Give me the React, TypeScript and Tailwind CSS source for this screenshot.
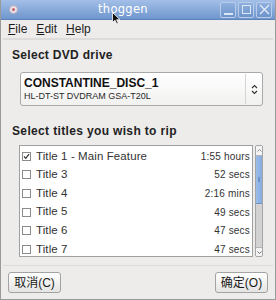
import React from "react";

const titles = [
  { name: "Title 1 - Main Feature", len: "1:55 hours", checked: true },
  { name: "Title 3", len: "52 secs", checked: false },
  { name: "Title 4", len: "2:16 mins", checked: false },
  { name: "Title 5", len: "49 secs", checked: false },
  { name: "Title 6", len: "47 secs", checked: false },
  { name: "Title 7", len: "47 secs", checked: false },
];

function WinButton({ children }: { children: React.ReactNode }) {
  return (
    <div className="w-[16px] h-[16px] rounded-[2px] border border-[#b9cdea] bg-gradient-to-b from-[#8fb0de] to-[#6e94cb] flex items-center justify-center">
      {children}
    </div>
  );
}

function Check({ checked }: { checked: boolean }) {
  return (
    <div className="w-[9px] h-[9px] border border-[#8a8a8a] bg-white flex items-center justify-center">
      {checked && (
        <svg width="7" height="7" viewBox="0 0 7 7">
          <path d="M1 3.5 L2.8 5.4 L6 1.2" stroke="#333" strokeWidth="1.2" fill="none" />
        </svg>
      )}
    </div>
  );
}

export default function App() {
  return (
    <div
      className="w-[276px] h-[300px] bg-[#edeceb] flex flex-col border-x border-b border-[#9a9a9a] overflow-hidden relative text-[#222]"
      style={{ fontFamily: '"Liberation Sans", Arial, sans-serif' }}
    >
      {/* title bar */}
      <div className="h-[20px] shrink-0 relative bg-gradient-to-b from-[#a3bfe8] to-[#6f96cd] border-b border-[#5d83bb] flex items-center">
        <div className="ml-[8px] w-[9px] h-[9px] rounded-full bg-[#e9e3ea] border border-[#b8a9bd] flex items-center justify-center">
          <div className="w-[3px] h-[3px] rounded-full bg-[#c0616a]" />
        </div>
        <div
          className="absolute left-[97px] top-0 h-[20px] flex items-center text-white text-[11.5px] tracking-[0.3px]"
          style={{ fontFamily: '"DejaVu Sans", sans-serif' }}
        >
          thoggen
        </div>
        <div className="ml-auto mr-[3px] flex gap-[2px]">
          <WinButton>
            <div className="w-[9px] h-[2px] bg-[#dce7f6] mt-[8px]" />
          </WinButton>
          <WinButton>
            <div className="w-[9px] h-[9px] border border-[#dce7f6]" />
          </WinButton>
          <WinButton>
            <svg width="11" height="11" viewBox="0 0 11 11">
              <path d="M1 1 L10 10 M10 1 L1 10" stroke="#e4ecf8" strokeWidth="1.3" />
            </svg>
          </WinButton>
        </div>
        {/* mouse cursor */}
        <svg className="absolute left-[111px] top-[12px]" width="9" height="13" viewBox="0 0 9 13">
          <path d="M0.5 0.5 L0.5 10.5 L3 8.2 L4.8 12 L6.3 11.3 L4.6 7.7 L8 7.7 Z" fill="#111" stroke="#fff" strokeWidth="0.8" />
        </svg>
      </div>

      {/* menu bar */}
      <div className="h-[18px] shrink-0 flex items-center gap-[9px] px-[7px] text-[12px] text-[#1c1c1c]">
        <span><span className="underline">F</span>ile</span>
        <span><span className="underline">E</span>dit</span>
        <span><span className="underline">H</span>elp</span>
      </div>
      <div className="h-[2px] shrink-0 mx-[2px] bg-[#dddcda]" />

      {/* content */}
      <div className="flex flex-col px-[11px] pt-[7px]">
        <div className="h-[16px] text-[12px] font-bold tracking-[0.3px] leading-[16px]">Select DVD drive</div>
        <div className="mt-[9px] ml-[8px] mr-[1px] h-[34px] rounded-[3px] border border-[#a9a9a9] bg-gradient-to-b from-white to-[#f1f1f0] flex items-stretch">
          <div className="flex-1 flex flex-col justify-center pl-[3px]">
            <div className="text-[12px] font-bold leading-[14px] text-[#111]">CONSTANTINE_DISC_1</div>
            <div className="text-[9px] leading-[12px] text-[#2a2a2a]">HL-DT-ST DVDRAM GSA-T20L</div>
          </div>
          <div className="w-px my-[1px] bg-[#d4d4d4]" />
          <div className="w-[16px] flex items-center justify-center">
            <svg width="7" height="11" viewBox="0 0 7 11">
              <path d="M1 4 L3.5 1.5 L6 4 M1 7 L3.5 9.5 L6 7" stroke="#333" strokeWidth="1.1" fill="none" />
            </svg>
          </div>
        </div>

        <div className="mt-[17px] h-[16px] text-[12px] font-bold tracking-[0.35px] leading-[16px]">Select titles you wish to rip</div>
        <div className="mt-[6px] ml-[7px] mr-[1px] h-[112px] flex">
          <div className="flex-1 border border-[#a0a0a0] bg-white overflow-hidden pl-[2px] pr-[2px] pt-[1px]">
            {titles.map((t) => (
              <div key={t.name} className="h-[18.6px] flex items-center">
                <Check checked={t.checked} />
                <span className="ml-[5px] text-[11.5px] tracking-[0.1px] text-[#333]">{t.name}</span>
                <span className="ml-auto text-[10px] tracking-[0.2px] text-[#333]">{t.len}</span>
              </div>
            ))}
          </div>
          <div className="ml-[2px] w-[8px] flex flex-col border border-[#a5a5a5] rounded-[2px] overflow-hidden bg-[#d2d2d2]">
            <div className="h-[10px] bg-[#f4f4f4] border-b border-[#b5b5b5] flex items-center justify-center">
              <svg width="5" height="3" viewBox="0 0 5 3"><path d="M0.5 2.5 L2.5 0.5 L4.5 2.5" stroke="#777" fill="none" strokeWidth="0.8" /></svg>
            </div>
            <div className="h-[48px] bg-gradient-to-r from-[#9bbde9] to-[#85abe0] border-b border-[#6f95c8] flex items-center justify-center">
              <div className="w-[2px] h-[5px] bg-[#6f95c8]" />
            </div>
            <div className="flex-1" />
            <div className="h-[9px] bg-[#f4f4f4] border-t border-[#b5b5b5] flex items-center justify-center">
              <svg width="5" height="3" viewBox="0 0 5 3"><path d="M0.5 0.5 L2.5 2.5 L4.5 0.5" stroke="#555" fill="none" strokeWidth="0.8" /></svg>
            </div>
          </div>
        </div>
      </div>

      <div className="mt-[8px] h-px mx-[2px] bg-[#dcdbd9]" />

      {/* buttons */}
      <div
        className="mt-[6px] px-[7px] flex justify-between text-[12px] text-[#1a1a1a]"
        style={{ fontFamily: '"Liberation Sans", "Noto Sans CJK SC", sans-serif' }}
      >
        <div className="w-[53px] h-[21px] rounded-[3px] border border-[#a3a3a3] bg-gradient-to-b from-white to-[#e4e4e3] flex items-center justify-center">
          取消(C)
        </div>
        <div className="w-[53px] h-[21px] rounded-[3px] border border-[#a3a3a3] bg-gradient-to-b from-white to-[#e4e4e3] flex items-center justify-center">
          确定(O)
        </div>
      </div>
    </div>
  );
}
